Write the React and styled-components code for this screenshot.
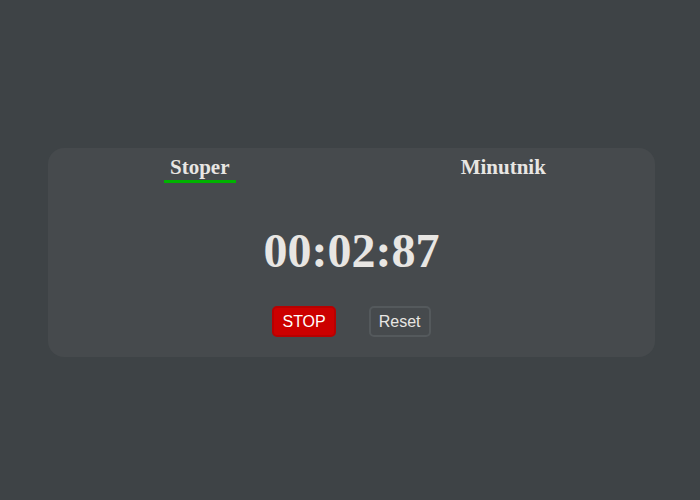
import React from "react";
import styled, { createGlobalStyle } from "styled-components";

const Global = createGlobalStyle`
  html, body { margin: 0; padding: 0; }
  body {
    background: #3e4346;
    font-family: "Liberation Serif", "Times New Roman", serif;
    color: #e8e6e3;
  }
`;

const Page = styled.div`
  width: 700px;
  height: 500px;
  box-sizing: border-box;
  padding: 148px 45px 0 48px;
`;

const Card = styled.div`
  width: 607px;
  height: 209px;
  box-sizing: border-box;
  background: #464a4d;
  border-radius: 16px;
  padding-top: 6px;
  display: flex;
  flex-direction: column;
  align-items: center;
`;

const Tabs = styled.div`
  display: grid;
  grid-template-columns: 1fr 1fr;
  width: 100%;
`;

const TabCell = styled.div`
  display: flex;
  justify-content: center;
`;

const Tab = styled.div`
  font-size: 21px;
  font-weight: bold;
  line-height: 26px;
  padding: 0 6px;
  border-bottom: 3px solid ${(p) => (p.$active ? "#00b300" : "transparent")};
  color: #e8e6e3;
`;

const Time = styled.div`
  margin-top: 40px;
  font-size: 48px;
  font-weight: bold;
  line-height: 56px;
`;

const Buttons = styled.div`
  margin-top: 27px;
  display: flex;
  gap: 33px;
`;

const Button = styled.button`
  box-sizing: border-box;
  height: 31px;
  padding: 0 8px;
  font-family: "Liberation Sans", Arial, sans-serif;
  font-size: 16px;
  border-radius: 5px;
  border: 2px solid ${(p) => (p.$danger ? "#b80000" : "#54595c")};
  background: ${(p) => (p.$danger ? "#cc0000" : "transparent")};
  color: ${(p) => (p.$danger ? "#ffffff" : "#e8e6e3")};
  cursor: pointer;
`;

export default function App() {
  return (
    <>
      <Global />
      <Page>
        <Card>
          <Tabs>
            <TabCell>
              <Tab $active>Stoper</Tab>
            </TabCell>
            <TabCell>
              <Tab>Minutnik</Tab>
            </TabCell>
          </Tabs>
          <Time>00:02:87</Time>
          <Buttons>
            <Button $danger>STOP</Button>
            <Button>Reset</Button>
          </Buttons>
        </Card>
      </Page>
    </>
  );
}
